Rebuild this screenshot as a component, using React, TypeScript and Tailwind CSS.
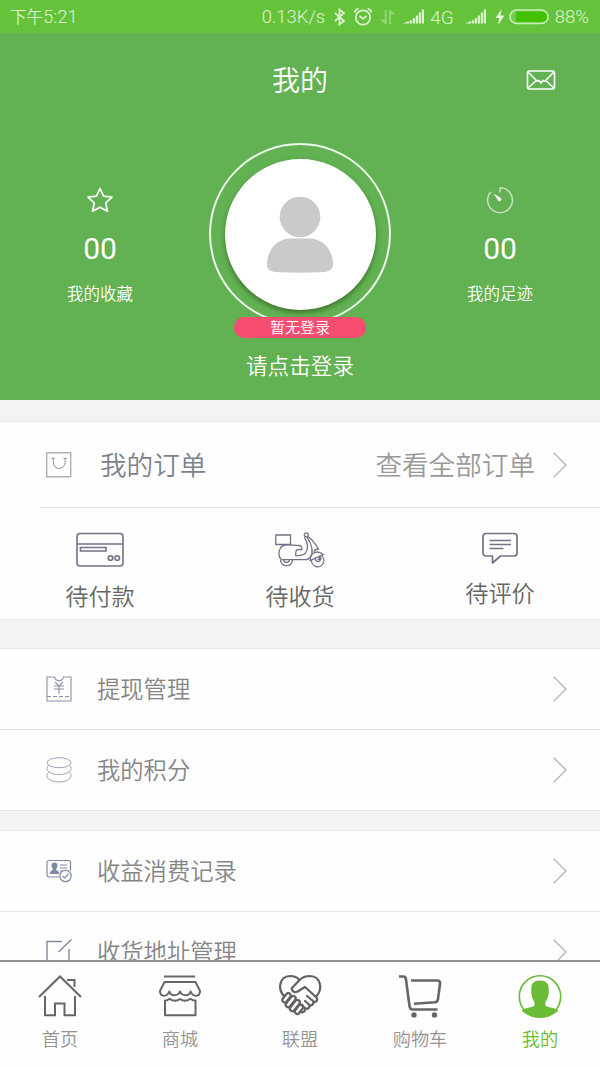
import type { ReactNode } from "react";

const FONT = "font-['Roboto','Noto_Sans_CJK_SC',sans-serif]";

function SignalIcon({ className = "" }: { className?: string }) {
  return (
    <svg width="22" height="15" viewBox="0 0 22 15" className={className}>
      <path
        d="M0 14.500 6 12v2.500zM6.800 11.300h2.200v3.200H6.800zM9.800 9H12v5.500H9.800zM12.800 6.500H15v8h-2.200zM15.800 3.500H18v11h-2.200zM18.800.5H21v14h-2.200z"
        fill="#dcf3d0"
      />
    </svg>
  );
}

function StatusBar() {
  return (
    <div className="flex h-[33px] items-center bg-[#65c33b] pl-[10px] pr-[11px] text-[18.500px] leading-none text-[#dcf3d0]">
      <span className="flex items-center pt-[2px] text-[16.500px] leading-[31px]">
        <span>下午</span>
        <span className="text-[18.500px]">5:21</span>
      </span>
      <span className="ml-auto pt-[2px]">0.13K/s</span>
      <svg width="14" height="18" viewBox="0 0 14 18" fill="none" stroke="#dcf3d0" strokeWidth="1.700" className="ml-[8px]">
        <path d="M2 5l9 8-4.500 3.500V1.500L11 5l-9 8" />
      </svg>
      <svg width="20" height="20" viewBox="0 0 20 20" fill="none" stroke="#dcf3d0" strokeWidth="1.700" className="ml-[6px]">
        <circle cx="10" cy="10.500" r="7.200" />
        <path d="M6.500 9l3.500 3 3.500-3M1.500 5.500C2 3.500 3.500 2 5.500 1.500M18.500 5.500C18 3.500 16.500 2 14.500 1.500" />
      </svg>
      <svg width="16" height="16" viewBox="0 0 16 16" fill="#92d673" className="ml-[7px]">
        <path d="M4.800 1h2v14h-1.500L0 10.500h4.800zM9 15h2V5.500h4.500L10.500 1H9z" />
      </svg>
      <SignalIcon className="ml-[7px]" />
      <span className="ml-[5px] pt-[2px] text-[19px]">4G</span>
      <SignalIcon className="ml-[11px]" />
      <svg width="10" height="16" viewBox="0 0 10 16" fill="#e6f7dd" className="ml-[8px]">
        <path d="M6.500 0L.5 9h3.700L3 16l6.500-9.500H5.500z" />
      </svg>
      <svg width="41" height="16" viewBox="0 0 41 16" className="ml-[4px]">
        <rect x="1" y="1" width="38" height="13.500" rx="6.750" fill="#73ca4c" stroke="#c8ecb6" strokeWidth="1.700" />
        <path d="M7 2.500h26a5 5 0 0 1 0 10.500H7z" fill="#43c000" />
      </svg>
      <span className="ml-[5px] pt-[2px]">88%</span>
    </div>
  );
}

function HeaderStat({ icon, label }: { icon: ReactNode; label: string }) {
  return (
    <div className="flex w-[200px] flex-col items-center pt-[53px]">
      {icon}
      <span className="mt-[17px] text-[30px] font-normal leading-[36px]">00</span>
      <span className="mt-[16px] text-[16.500px] leading-[24px]">{label}</span>
    </div>
  );
}

function ProfileHeader() {
  return (
    <header className="h-[367px] bg-[#62b152] text-white">
      <div className="grid h-[96px] grid-cols-3 items-center">
        <h1 className="col-start-2 pt-[2px] text-center text-[28px] leading-[40px]">我的</h1>
        <svg width="30" height="20" viewBox="0 0 30 20" fill="none" stroke="#fff" strokeWidth="1.600" className="mb-[3px] ml-[126px]">
          <rect x="1.500" y="1" width="27" height="18" rx="2" />
          <path d="M2 2l8.500 8.500c1 1 2 .5 2.500 0l2 2.500 2-2.500c.5.5 1.500 1 2.500 0L28 2M2 18l9-8M28 18l-9-8" />
        </svg>
      </div>
      <div className="flex">
        <HeaderStat
          label="我的收藏"
          icon={
            <svg width="28" height="28" viewBox="0 0 28 28" fill="none" stroke="#fff" strokeWidth="1.700" strokeLinejoin="round" className="mt-[4px]">
              <path d="M14 2.500l3.600 7.700 8.400 1-6.200 5.800 1.600 8.300-7.400-4.100-7.400 4.100 1.600-8.300L2 11.200l8.400-1z" />
            </svg>
          }
        />
        <div className="flex w-[200px] flex-col items-center pt-[14px]">
          <div className="flex size-[182px] items-center justify-center rounded-full border-2 border-[#edf7eb]">
            <div className="flex size-[151px] items-center justify-center rounded-full bg-white shadow-[0_3px_5px_#3f762f]">
              <svg width="68" height="78" viewBox="0 0 68 78" fill="#cacaca" className="mt-[2px]">
                <circle cx="34" cy="21" r="20.300" />
                <path d="M34 42.500h9C58 42.500 67 55 67 68c0 6-4 8-12 8.300q-21 .7-42 0C4.500 76 1 74 1 68 1 55 10 42.500 25 42.500z" />
              </svg>
            </div>
          </div>
          <div className="relative -mt-[8px] h-[21px] w-[132px] rounded-[10px] bg-[#f74d70] text-center text-[15px] leading-[23px]">
            暂无登录
          </div>
          <span className="mt-[12px] text-[21.600px] leading-[33px]">请点击登录</span>
        </div>
        <HeaderStat
          label="我的足迹"
          icon={
            <svg width="28" height="28" viewBox="0 0 28 28" fill="none" stroke="#c4e2be" strokeWidth="1.500" className="mt-[4px]">
              <path d="M14 6.500V1.800A12.400 12.400 0 1 1 5 5.700" />
              <path d="M7.500 7.500l7.500 4.500a2 2 0 0 1-2.500 3z" fill="#fff" stroke="none" />
            </svg>
          }
        />
      </div>
    </header>
  );
}

function Chevron() {
  return (
    <svg width="14" height="26" viewBox="0 0 14 26" fill="none" stroke="#b5b5b5" strokeWidth="1.300" className="ml-auto">
      <path d="M.7.7L13 13 .7 25.300" />
    </svg>
  );
}

function OrderItem({ icon, label }: { icon: ReactNode; label: string }) {
  return (
    <div className="flex flex-1 flex-col items-center pt-[24px]">
      {icon}
      <span className="mt-[12px] text-[23.200px] leading-[34px] text-[#666]">{label}</span>
    </div>
  );
}

function Orders() {
  return (
    <section className="bg-[#fefefe]">
      <div className="flex h-[85px] items-center pl-[46px] pr-[33px]">
        <svg width="26" height="26" viewBox="0 0 26 26" fill="none" stroke="#8e9295" strokeWidth="1">
          <rect x=".8" y=".8" width="24" height="24" />
          <path d="M5.500 6.300H9M17.500 6.300H21M7.300 6.500v4a5.900 6 0 0 0 11.800 0v-4" />
        </svg>
        <span className="ml-[28px] pt-[3px] text-[26.600px] text-[#7b838c]">我的订单</span>
        <span className="ml-auto mr-[18px] pt-[3px] text-[26.600px] text-[#999]">查看全部订单</span>
        <span><Chevron /></span>
      </div>
      <div className="ml-[40px] h-px bg-[#e2e2e2]" />
      <div className="flex h-[111px]">
        <OrderItem
          label="待付款"
          icon={
            <svg width="48" height="36" viewBox="0 0 48 36" fill="none" stroke="#72728a" strokeWidth="1.600">
              <rect x="1" y="1.500" width="46" height="32.500" rx="3" />
              <path d="M1 12h46M4.500 15.500h25.500v3.500H4.500z" />
              <circle cx="34.500" cy="26" r="2.300" />
              <circle cx="41.200" cy="26" r="2.300" />
            </svg>
          }
        />
        <OrderItem
          label="待收货"
          icon={
            <svg width="50" height="36" viewBox="0 0 50 36" fill="none" stroke="#72728a" strokeWidth="1.300">
              <path d="M.8 3h14.700v9.500H.8z" />
              <path d="M6.500 27.700C3.500 25 3 20 5.500 16c1.500-2.500 3-3 5-3 5-.5 9 .5 13 .5 3 0 3.500 1.500 3.200 4-2.700 0-4.500-.2-5 .5-1 1-1 3-1 5.500 4 .3 7.500 0 9.600-2.200 3.700-4.300 2.700-10-.8-16" />
              <path d="M6.500 27.700h23c6 0 8.500-5 7.300-11.500-.5-4-2.500-8-5-11.300M33 4.500c3.500 2.500 7.500 7 10.300 12.500-3 .3-4 1-4.500 2.500" />
              <circle cx="31.300" cy="2.800" r="2" />
              <path d="M35 28.500c0-5 3-8.500 7-8.500 2.500 0 4.500 1 6.300 2.500L35 28.500zM36.500 27.800a6.200 6.200 0 1 0 9.500-4.500M40.500 26a2.700 2.700 0 1 0 4-1.500v3h-2" />
              <path d="M5.500 27.700a6 6 0 0 0 12 0M8.700 27.700a2.800 2.800 0 0 0 5.600 0" />
            </svg>
          }
        />
        <OrderItem
          label="待评价"
          icon={
            <svg width="36" height="33" viewBox="0 0 36 33" fill="none" stroke="#72728a" strokeWidth="1.700" strokeLinejoin="round">
              <path d="M4 1.500h28a3 3 0 0 1 3 3V21a3 3 0 0 1-3 3H18.500L10.500 31v-7H4a3 3 0 0 1-3-3V4.500a3 3 0 0 1 3-3zM7.500 8.500h21.500M7.500 12.500h21.500M7.500 16.500h14" />
            </svg>
          }
        />
      </div>
    </section>
  );
}

function MenuRow({ icon, label }: { icon: ReactNode; label: string }) {
  return (
    <div className="flex h-[80px] items-center bg-[#fefefe] pl-[46px] pr-[33px] text-[23.300px] text-[#858585]">
      {icon}
      <span className="ml-[25px] pt-[3px]">{label}</span>
      <Chevron />
    </div>
  );
}

function Tab({ icon, label, active }: { icon: ReactNode; label: string; active?: boolean }) {
  return (
    <div className="flex flex-1 flex-col items-center pt-[12px]">
      {icon}
      <span className={`mt-[8px] text-[18.200px] leading-[27px] ${active ? "text-[#67bb31]" : "text-[#949494]"}`}>
        {label}
      </span>
    </div>
  );
}

function TabBar() {
  return (
    <nav className="flex h-[107px] shrink-0 border-t-2 border-[#929292] bg-[#fefefe]">
      <Tab
        label="首页"
        icon={
          <svg width="44" height="44" viewBox="0 0 44 44" fill="none" stroke="#666" strokeWidth="2">
            <path d="M1 23L22 2.500l21 20.500M7 22v19.300h10V29.500h9.500v11.800H37V22M29 6h7.500v7" />
          </svg>
        }
      />
      <Tab
        label="商城"
        icon={
          <svg width="44" height="44" viewBox="0 0 44 44" fill="none" stroke="#666" strokeWidth="2" strokeLinejoin="round">
            <path d="M6 2.500h31M6.500 8h31L42 17c0 6-7 6.500-9.300.5-1.500 5-8.700 5-10.700 0-2 5-9.200 5-10.700 0C9 23.500 2 23 2 17z" />
            <path d="M7 26.500v14.800h30.500V26.500c-1.800.3-3.500-.5-5-1.700-3 2.500-7.500 2.500-10.500.2-3 2.300-7.500 2.300-10.500-.2-1.500 1.200-3 2-4.500 1.700z" />
          </svg>
        }
      />
      <Tab
        label="联盟"
        icon={
          <svg width="44" height="44" viewBox="0 0 44 44" fill="none" stroke="#666060" strokeWidth="2.200" strokeLinejoin="round" strokeLinecap="round">
            <path d="M6.500 22.500C-1 15 1.500 2.500 12 2c4 0 7.500 1.500 9.500 4C24 3.500 28 2 32 2c10.500.5 13.500 12.500 6 20.500" />
            <path d="M21.500 6l-8 8.500c1 4 4 4.500 7 2.500l6.500-4 11.500 10.500c2 3-1 5.500-3.500 3.500l-6-5M35 27c1.500 3-1.500 5.500-4 3.500l-4-3.500M31 30.500c1.500 3-1.500 5.500-4 3.500l-3-2.500M27 34.500c.5 3-2 4.500-4.500 3.500" />
            <rect x="6.300" y="18.500" width="4.800" height="10.500" rx="2.400" transform="rotate(38 8.600 23.500)" />
            <rect x="10.300" y="21" width="4.800" height="13" rx="2.400" transform="rotate(38 12.600 27.500)" />
            <rect x="14.500" y="25" width="4.800" height="13" rx="2.400" transform="rotate(38 16.800 31.500)" />
            <rect x="18.800" y="30" width="4.800" height="10.500" rx="2.400" transform="rotate(38 21.100 35)" />
          </svg>
        }
      />
      <Tab
        label="购物车"
        icon={
          <svg width="44" height="44" viewBox="0 0 44 44" fill="none" stroke="#666668" strokeWidth="2.600">
            <path d="M1 2.500h4.500c2 0 2.300 1.500 2.500 3l3.500 26.500c.3 2 1 3.500 3 3.500h25M13 6.500h26c2.500 0 3.300 1 3 3.500l-2 15c-.3 2-1 3-3 3.200L16 29.800" />
            <circle cx="16" cy="41" r="2.700" fill="#666668" stroke="none" />
            <circle cx="36.500" cy="41" r="2.700" fill="#666668" stroke="none" />
          </svg>
        }
      />
      <Tab
        active
        label="我的"
        icon={
          <svg width="44" height="44" viewBox="0 0 44 44">
            <circle cx="22" cy="22.500" r="20.700" fill="none" stroke="#6abb36" strokeWidth="1.600" />
            <path
              d="M22 6.500c6 0 9 3 8.700 9 .5 5-1 9.500-3.200 12.500v3.500c2 2 8 2 13 4.500-4 5-10.500 7.500-18.500 7.500s-14.500-2.500-18.500-7.500c5-2.500 11-2.500 13-4.500V28c-2.200-3-3.700-7.500-3.200-12.500-.3-6 2.700-9 8.700-9z"
              fill="#6abb36"
            />
          </svg>
        }
      />
    </nav>
  );
}

export default function App() {
  return (
    <div className={`flex h-[1067px] w-[600px] flex-col overflow-hidden bg-[#f3f3f3] font-[350] ${FONT}`}>
      <StatusBar />
      <ProfileHeader />
      <main className="min-h-0 flex-1 overflow-hidden">
        <div className="h-[22px] border-b border-[#e8e8e8]" />
        <Orders />
        <div className="h-[30px] border-y border-[#e6e6e6]" />
        <MenuRow
          label="提现管理"
          icon={
            <svg width="26" height="26" viewBox="0 0 26 26" fill="none" stroke="#8992a8" strokeWidth="1.100">
              <path d="M1 1h7.500c.5 2 2 3.700 4.500 3.700S17 3 17.500 1H25v24H1z" />
              <path d="M9 6l4 4 4-4M13 10v8M8 10h10M8 13h10" />
              <path d="M1 20.500h24" strokeDasharray="4 2" />
            </svg>
          }
        />
        <div className="h-px bg-[#e2e2e2]" />
        <MenuRow
          label="我的积分"
          icon={
            <svg width="26" height="26" viewBox="0 0 26 26" fill="none" stroke="#9ca4b5" strokeWidth="1">
              <ellipse cx="13" cy="5.700" rx="12" ry="5" />
              <path d="M2.500 8.500c-4.500 4 1 9 10.500 9s15-5 10.500-9M2.500 15.500c-4.500 4 1 9.500 10.500 9.500s15-5.500 10.500-9.500" />
            </svg>
          }
        />
        <div className="h-[21px] border-y border-[#e6e6e6]" />
        <MenuRow
          label="收益消费记录"
          icon={
            <svg width="26" height="26" viewBox="0 0 26 26" fill="none" stroke="#7f8ba3" strokeWidth="1.200">
              <path d="M13 19H3a2 2 0 0 1-2-2V4.500a2 2 0 0 1 2-2h19.500a2 2 0 0 1 2 2V13M14 7h7M14 10h7M14 13h3" />
              <path d="M8.500 4.500c3 0 3.500 3 2.500 5l-1 2 3 2.500v2H4v-2l3-2.500-1-2c-1-2-.5-5 2.500-5z" fill="#7f8ba3" stroke="none" />
              <circle cx="19.500" cy="18" r="5.700" />
              <path d="M16.500 18l2 2 4-4" />
            </svg>
          }
        />
        <div className="h-px bg-[#e6e6e6]" />
        <MenuRow
          label="收货地址管理"
          icon={
            <svg width="26" height="26" viewBox="0 0 26 26" fill="none" stroke="#808ba3" strokeWidth="1.400">
              <path d="M16 2.500H1V25h22V10M12.500 13L25.500.5" />
            </svg>
          }
        />
      </main>
      <TabBar />
    </div>
  );
}
